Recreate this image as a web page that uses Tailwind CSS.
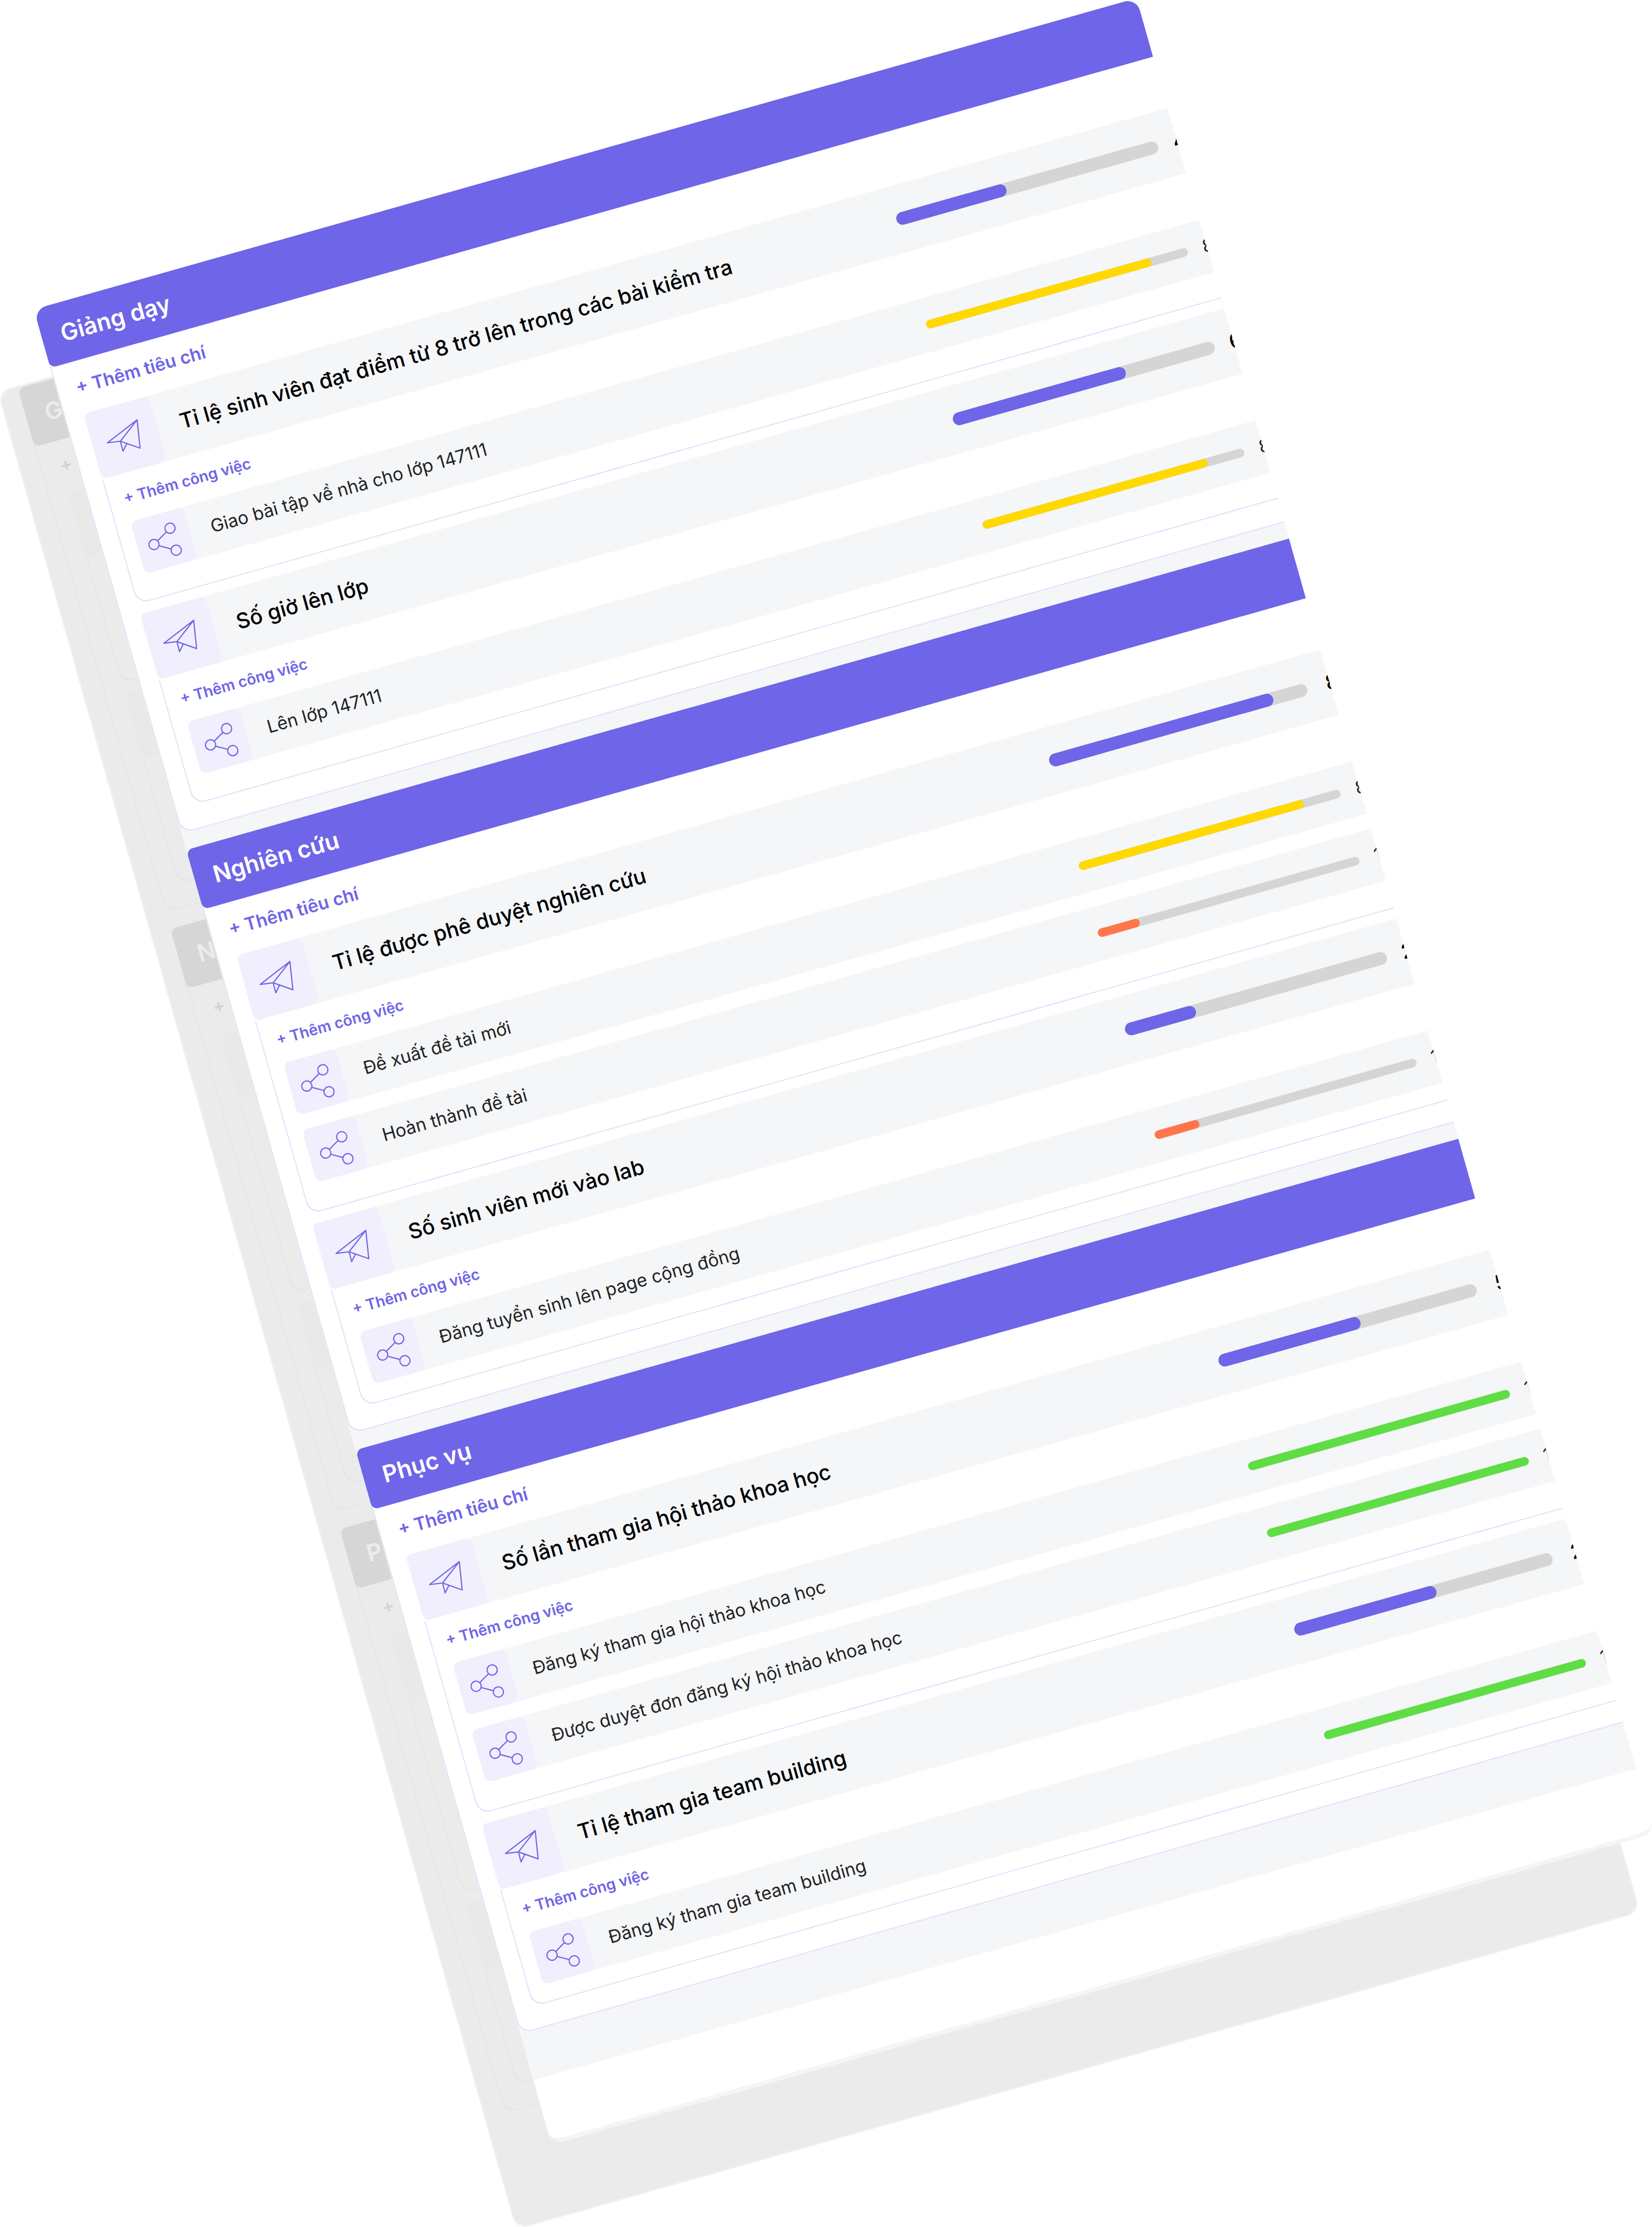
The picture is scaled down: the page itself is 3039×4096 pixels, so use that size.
<!DOCTYPE html>
<html lang="vi">
<head>
<meta charset="utf-8">
<meta name="viewport" content="width=device-width, initial-scale=1">
<title>Tiêu chí đánh giá</title>
<script src="https://cdn.jsdelivr.net/npm/@tailwindcss/browser@4"></script>
</head>
<body class="bg-white">
<svg class="hidden" aria-hidden="true">
  <symbol id="plane" viewBox="0 0 124 125">
    <path d="M91.900 37.200 27.700 63.100 51.600 66.700 83 88.800ZM91.900 37.200 51.600 66.700 51.200 85.600 62.100 73.700" fill="none" stroke="currentColor" stroke-width="2.200" stroke-linejoin="round" stroke-linecap="round"/>
  </symbol>
  <symbol id="share" viewBox="0 0 100 100">
    <g fill="none" stroke="currentColor" stroke-width="2.200">
      <circle cx="67" cy="31.500" r="9.400"/><circle cx="30.500" cy="52.300" r="9.400"/><circle cx="67" cy="73.500" r="9.400"/>
      <path d="M38.700 47.600 58.800 36.200M38.700 57 58.800 68.800"/>
    </g>
  </symbol>
</svg>

<main class="relative h-screen w-full overflow-hidden bg-white font-['Inter',sans-serif]">
  <div id="shadow" aria-hidden="true" class="absolute left-[-5px] top-[720px] h-[3513px] w-[70.73%] origin-top-left rotate-[-15.76deg] overflow-hidden rounded-[24px] border-3 border-[#f0f0f0] bg-[#ebebeb] pl-[35px] pt-[2px]"></div>
  <div id="board" class="absolute left-[62px] top-[569px] w-[69.35%] origin-top-left rotate-[-15.76deg] overflow-hidden rounded-[24px] border-b-8 border-[#f4f5f7] bg-white"></div>
</main>

<script>
const sections = [
  { name: "Giảng dạy", groups: [
    { name: "Tỉ lệ sinh viên đạt điểm từ 8 trở lên trong các bài kiểm tra", value: 42, tasks: [["Giao bài tập về nhà cho lớp 147111", 86]] },
    { name: "Số giờ lên lớp", value: 66, tasks: [["Lên lớp 147111", 86]] },
  ]},
  { name: "Nghiên cứu", groups: [
    { name: "Tỉ lệ được phê duyệt nghiên cứu", value: 87, narrow: true, pad: "pb-[51px]", tasks: [["Đề xuất đề tài mới", 86], ["Hoàn thành đề tài", 16]] },
    { name: "Số sinh viên mới vào lab", value: 27, pad: "pb-8", tasks: [["Đăng tuyển sinh lên page cộng đồng", 17]] },
  ]},
  { name: "Phục vụ", groups: [
    { name: "Số lần tham gia hội thảo khoa học", value: 55, narrow: true, pad: "pb-[51px]", tasks: [["Đăng ký tham gia hội thảo khoa học", 100], ["Được duyệt đơn đăng ký hội thảo khoa học", 100]] },
    { name: "Tỉ lệ tham gia team building", value: 55, label: "2/4", narrow: true, pad: "pb-8", tasks: [["Đăng ký tham gia team building", 100]] },
  ]},
];

const taskColor = v => v >= 100 ? "bg-[#5fdd45]" : v >= 50 ? "bg-[#ffd900]" : "bg-[#ff764b]";

const bar = (v, label, name, size, color, text) => `
  <div class="ml-auto shrink-0 overflow-hidden rounded-full bg-[#d5d5d5] ${size}" role="progressbar" aria-label="${name}" aria-valuenow="${v}" aria-valuemin="0" aria-valuemax="100">
    <div class="h-full rounded-full ${color}" style="width:${v}%"></div>
  </div>
  <span class="w-[7px] shrink-0 whitespace-nowrap ${text}">${label || v + "%"}</span>`;

const task = ([name, v]) => `
  <li class="ml-[27px] flex h-[100px] items-center rounded-l-xl bg-[#f4f6f8]">
    <span class="mr-10 size-[100px] shrink-0 rounded-xl bg-[#f1effd] text-[#6f65e8]"><svg class="size-full"><use href="#share"/></svg></span>
    <span class="whitespace-nowrap text-[33px] text-[#222]">${name}</span>
    ${bar(v, "", name, "mr-[29px] h-4 w-[500px]", taskColor(v), "text-[33px] text-[#222]")}
  </li>`;

const group = g => `
  <article class="ml-[34px]">
    <header class="flex h-[125px] items-center rounded-l-[10px] bg-[#f4f6f8]">
      <span class="mr-[43px] h-[125px] w-[124px] shrink-0 rounded-[10px] bg-[#f1effd] text-[#6f65e8]"><svg class="size-full"><use href="#plane"/></svg></span>
      <h3 class="whitespace-nowrap text-[39px] font-medium text-black">${g.name}</h3>
      ${bar(g.value, g.label, g.name, g.narrow ? "mr-9 h-6 w-[493px]" : "mr-[29px] h-6 w-[500px]", "bg-[#6f65e8]", "text-[38px] font-medium text-black")}
    </header>
    <div class="rounded-bl-[24px] border-b-2 border-l-2 border-[#e0dcfb] ${g.pad || "pb-12"}">
      <button type="button" class="ml-[27px] flex h-[89px] items-center whitespace-nowrap text-[28px] font-semibold text-[#6f65e8]">+ Thêm công việc</button>
      <ul class="flex flex-col gap-7">${g.tasks.map(task).join("")}</ul>
    </div>
  </article>`;

const section = (s, i) => `
  <section>
    <h2 class="relative flex items-center bg-[#6f65e8] pl-9 text-[43px] font-semibold text-white ${i ? "h-[114px] rounded-l-xl" : "h-[112px] rounded-bl-xl"}">${s.name}</h2>
    <div class="-mt-3 rounded-bl-[24px] border-b-2 border-l-2 border-[#e0dcfb] bg-white pt-3 ${i ? "pb-10" : "pb-[43px]"}">
      <button type="button" class="ml-[34px] flex h-[98px] items-center whitespace-nowrap text-[33px] font-semibold text-[#6f65e8]">+ Thêm tiêu chí</button>
      <div class="flex flex-col gap-[19px]">${s.groups.map(group).join("")}</div>
    </div>
  </section>`;

/* The card underneath only peeks out on its left side, so its texts are cut short there. */
const ghostGroup = g => `
  <div class="ml-[34px]">
    <div class="h-[125px] rounded-l-[10px] bg-[#e9e9e9]"></div>
    <div class="rounded-bl-[24px] border-b-2 border-l-2 border-[#e4e4e4] ${g.pad || "pb-12"}">
      <div class="h-[89px]"></div>
      <div class="flex flex-col gap-7">${g.tasks.map(() => `<div class="h-[100px]"></div>`).join("")}</div>
    </div>
  </div>`;

const ghostSection = (s, i) => `
  <div>
    <div class="relative flex items-center rounded-l-xl bg-[#d6d6d6] pl-9 text-[43px] font-semibold text-[#ececec] ${i ? "h-[114px]" : "h-[112px]"}">${s.name[0]}</div>
    <div class="-mt-3 rounded-bl-[24px] border-b-2 border-l-2 border-[#e4e4e4] pt-3 ${i ? "pb-10" : "pb-[43px]"}">
      <div class="ml-[34px] flex h-[98px] items-center text-[33px] font-semibold text-[#d2d2d2]">+ T</div>
      <div class="flex flex-col gap-[19px]">${s.groups.map(ghostGroup).join("")}</div>
    </div>
  </div>`;

document.getElementById("board").innerHTML =
  `<div class="flex flex-col gap-[31px] bg-[#f4f6f8] pb-[88px]">${sections.map(section).join("")}</div><div class="h-[116px]"></div>`;
document.getElementById("shadow").innerHTML =
  `<div class="flex flex-col gap-[31px]">${sections.map(ghostSection).join("")}</div>`;
</script>
</body>
</html>
